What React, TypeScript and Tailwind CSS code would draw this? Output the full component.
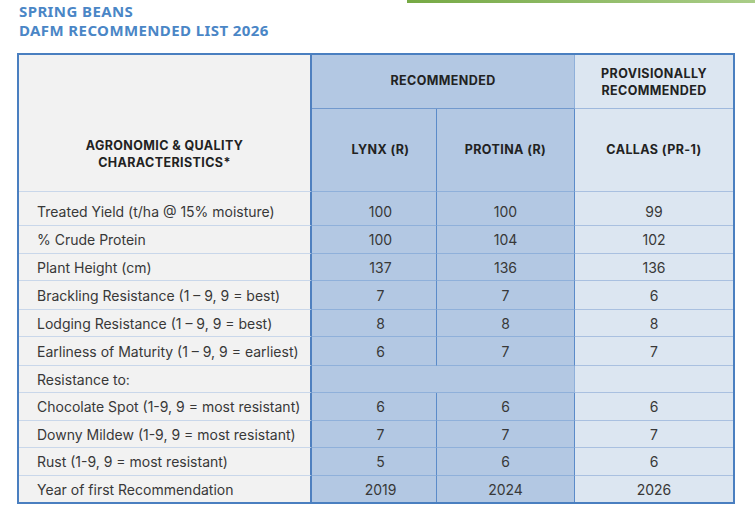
import React from 'react';

const titleFont = { fontFamily: '"Noto Sans", "Liberation Sans", sans-serif' };
const bodyFont = { fontFamily: 'Inter, "Noto Sans", "Liberation Sans", sans-serif' };

interface Row {
  label: string;
  h: string;
  lynx?: string;
  protina?: string;
  callas?: string;
  section?: boolean;
}

const rows: Row[] = [
  { label: 'Treated Yield (t/ha @ 15% moisture)', h: 'h-[34px] pt-[5px]', lynx: '100', protina: '100', callas: '99' },
  { label: '% Crude Protein', h: 'h-[28px]', lynx: '100', protina: '104', callas: '102' },
  { label: 'Plant Height (cm)', h: 'h-[27px]', lynx: '137', protina: '136', callas: '136' },
  { label: 'Brackling Resistance (1 – 9, 9 = best)', h: 'h-[29px]', lynx: '7', protina: '7', callas: '6' },
  { label: 'Lodging Resistance (1 – 9, 9 = best)', h: 'h-[27px]', lynx: '8', protina: '8', callas: '8' },
  { label: 'Earliness of Maturity (1 – 9, 9 = earliest)', h: 'h-[29px]', lynx: '6', protina: '7', callas: '7' },
  { label: 'Resistance to:', h: 'h-[27px]', section: true },
  { label: 'Chocolate Spot (1-9, 9 = most resistant)', h: 'h-[28px]', lynx: '6', protina: '6', callas: '6' },
  { label: 'Downy Mildew (1-9, 9 = most resistant)', h: 'h-[27px]', lynx: '7', protina: '7', callas: '7' },
  { label: 'Rust (1-9, 9 = most resistant)', h: 'h-[28px]', lynx: '5', protina: '6', callas: '6' },
  { label: 'Year of first Recommendation', h: 'h-[26px] border-b-0', lynx: '2019', protina: '2024', callas: '2026' },
];

const App: React.FC = () => {
  return (
    <div className="w-[755px] h-[515px] bg-white overflow-hidden">
      <div className="flex justify-end">
        <div className="w-[348px] h-[3px] bg-gradient-to-r from-[#76a944] to-[#aacd88]"></div>
      </div>

      <div className="pl-[19px] -mt-[1px] text-[15px] leading-[19px] font-bold tracking-[0.4px] text-[#4a86c6]" style={titleFont}>
        <div>SPRING BEANS</div>
        <div>DAFM RECOMMENDED LIST 2026</div>
      </div>

      <div className="ml-[17px] mt-[13px] w-[718px] border-2 border-[#4a7fc0]" style={bodyFont}>
        <div className="grid grid-cols-[293px_125px_138px_158px]">
          {/* header */}
          <div className="row-span-2 bg-[#f2f2f2] border-r-2 border-r-[#4f80bf] border-b border-b-[#c9d7ea] flex items-center justify-center pt-[61px] text-center text-[12.5px] leading-[17px] font-bold tracking-[0.4px] text-[#222]">
            AGRONOMIC &amp; QUALITY
            <br />
            CHARACTERISTICS*
          </div>
          <div className="col-span-2 h-[54px] bg-[#b3c8e3] border-b border-b-[#7299cd] border-r border-r-[#8fb0da] flex items-center justify-center text-[12.5px] font-bold tracking-[0.4px] text-[#222]">
            RECOMMENDED
          </div>
          <div className="h-[54px] bg-[#dce6f1] border-b border-b-[#9fb9dd] flex items-center justify-center text-center text-[12.5px] leading-[17px] font-bold tracking-[0.4px] text-[#222]">
            PROVISIONALLY
            <br />
            RECOMMENDED
          </div>
          <div className="h-[83px] bg-[#b3c8e3] border-r border-r-[#5b8bc9] border-b border-b-[#8fb0da] flex items-center justify-center pl-[13px] text-[12.5px] font-bold tracking-[0.4px] text-[#222]">
            LYNX (R)
          </div>
          <div className="h-[83px] bg-[#b3c8e3] border-r border-r-[#5b8bc9] border-b border-b-[#8fb0da] flex items-center justify-center text-[12.5px] font-bold tracking-[0.4px] text-[#222]">
            PROTINA (R)
          </div>
          <div className="h-[83px] bg-[#dce6f1] border-b border-b-[#a9c0e0] flex items-center justify-center text-[12.5px] font-bold tracking-[0.4px] text-[#222]">
            CALLAS (PR-1)
          </div>

          {/* body */}
          {rows.map((row) => (
            <React.Fragment key={row.label}>
              <div className={`${row.h} bg-[#f2f2f2] border-r-2 border-r-[#4f80bf] border-b border-b-[#c9d7ea] flex items-center pl-[18px] text-[14px] text-[#383838]`}>
                {row.label}
              </div>
              {row.section ? (
                <div className={`${row.h} col-span-2 bg-[#b3c8e3] border-r border-r-[#8fb0da] border-b border-b-[#8fb0da]`}></div>
              ) : (
                <>
                  <div className={`${row.h} bg-[#b3c8e3] border-r border-r-[#5b8bc9] border-b border-b-[#8fb0da] flex items-center justify-center pl-[13px] text-[14px] text-[#383838]`}>
                    {row.lynx}
                  </div>
                  <div className={`${row.h} bg-[#b3c8e3] border-r border-r-[#5b8bc9] border-b border-b-[#8fb0da] flex items-center justify-center text-[14px] text-[#383838]`}>
                    {row.protina}
                  </div>
                </>
              )}
              <div className={`${row.h} bg-[#dce6f1] border-b border-b-[#a9c0e0] flex items-center justify-center text-[14px] text-[#383838]`}>
                {row.callas}
              </div>
            </React.Fragment>
          ))}
        </div>
      </div>
    </div>
  );
};

export default App;
